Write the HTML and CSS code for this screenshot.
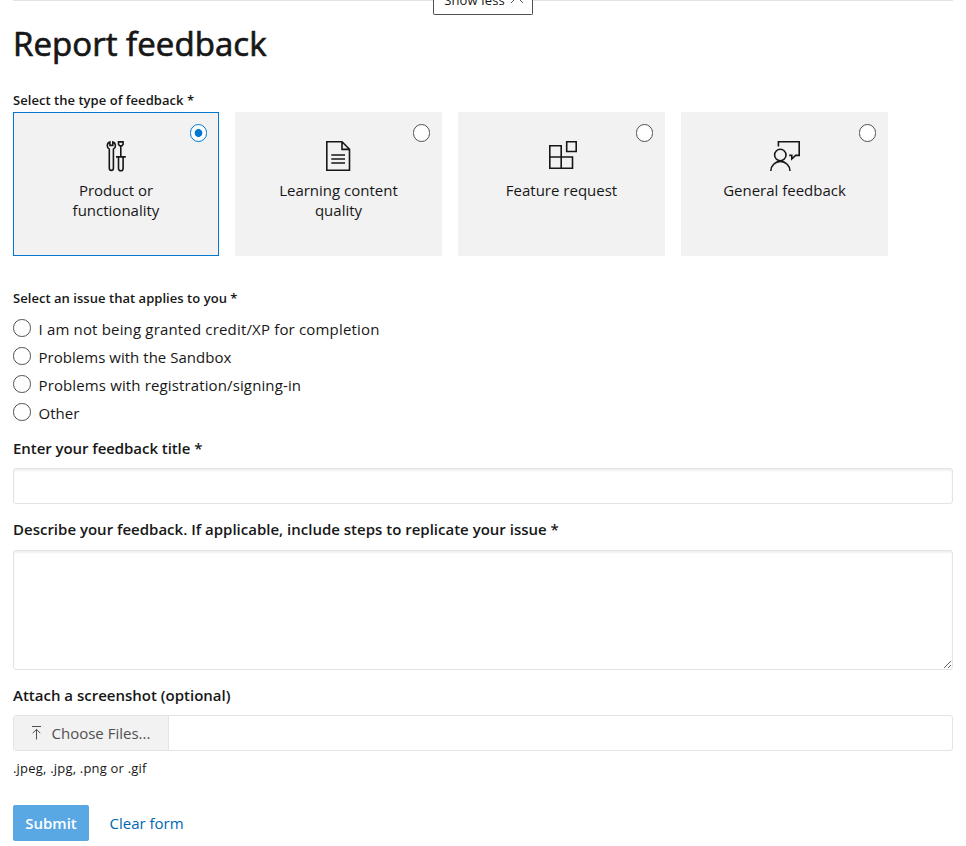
FILE: index.html
```html
<!DOCTYPE html>
<html lang="en">
<head>
<meta charset="utf-8">
<title>Report feedback</title>
<link rel="stylesheet" href="styles.css">
</head>
<body>
<main class="page">
  <div class="toggle-bar">
    <button class="toggle" type="button"><span class="toggle-text">Show less</span>
      <svg class="chevron" width="14" height="8" viewBox="0 0 14 8"><path d="M1 7 7 1l6 6" fill="none" stroke="#505050" stroke-width="1"/></svg>
    </button>
  </div>
  <h1 class="title"><span>Report feedback</span></h1>
  <form class="form">
    <div class="label label-type"><span>Select the type of feedback *</span></div>
    <div class="cards">
      <label class="card card-selected">
        <input class="radio card-radio" type="radio" name="type" checked>
        <svg class="icon" width="33" height="32" viewBox="0 0 33 32"><path d="M9.9 2.1C6.4 3.2 6.6 7.6 9.3 9.1V28.3a2 2 0 0 0 4.1 0V9.1C16.1 7.6 16.3 3.2 12.8 2.1V5.4H9.9ZM18.5 1.9h4.6v2.4l-1 1.5h-2.6l-1-1.5ZM20.8 5.8V16.8M16 16.9h9.8M18.5 17v11.5a2.3 2.3 0 0 0 4.6 0V17"/></svg>
        <span class="card-text"><span>Product or</span><br><span>functionality</span></span>
      </label>
      <label class="card">
        <input class="radio card-radio" type="radio" name="type">
        <svg class="icon" width="33" height="32" viewBox="0 0 33 32"><path d="M4.8 1.8H20L27.5 9.3V30.2H4.8ZM20 1.8V9.4H27.5M9.3 15H23M9.3 19H23M9.3 23H23"/></svg>
        <span class="card-text"><span>Learning content</span><br><span>quality</span></span>
      </label>
      <label class="card">
        <input class="radio card-radio" type="radio" name="type">
        <svg class="icon" width="33" height="32" viewBox="0 0 33 32"><path d="M4.8 5.8H16.2V28.2H4.8ZM4.8 17H27.5V28.2H16.2M21.7 1.8H31.2V11.5H21.7Z"/></svg>
        <span class="card-text"><span>Feature request</span></span>
      </label>
      <label class="card">
        <input class="radio card-radio" type="radio" name="type">
        <svg class="icon" width="33" height="32" viewBox="0 0 33 32"><path d="M10.4 6.6V1.8H31.2V15.4H27.6L23.8 19V15.4H21.2M2.8 31a9.6 9.6 0 0 1 19.2 0"/><circle cx="12.3" cy="15" r="5.7"/></svg>
        <span class="card-text"><span>General feedback</span></span>
      </label>
    </div>
    <div class="label label-issue"><span>Select an issue that applies to you *</span></div>
    <div class="issues">
      <label class="issue"><input class="radio" type="radio" name="issue"><span class="issue-long">I am not being granted credit/XP for completion</span></label>
      <label class="issue"><input class="radio" type="radio" name="issue"><span>Problems with the Sandbox</span></label>
      <label class="issue"><input class="radio" type="radio" name="issue"><span class="issue-medium">Problems with registration/signing-in</span></label>
      <label class="issue"><input class="radio" type="radio" name="issue"><span>Other</span></label>
    </div>
    <label class="field-label label-title" for="title"><span>Enter your feedback title *</span></label>
    <input class="input" id="title" type="text">
    <label class="field-label label-describe" for="description"><span>Describe your feedback. If applicable, include steps to replicate your issue *</span></label>
    <textarea class="textarea" id="description"></textarea>
    <div class="field-label label-attach"><span>Attach a screenshot (optional)</span></div>
    <div class="file">
      <span class="file-cta">
        <svg width="11" height="14" viewBox="0 0 11 14"><path d="M1 .5H10M5.5 13.5V3.5M1.7 7.2 5.5 3.4 9.3 7.2" fill="none" stroke="#505050"/></svg>
        <span>Choose Files...</span>
      </span>
    </div>
    <div class="help"><span>.jpeg, .jpg, .png or .gif</span></div>
    <div class="actions">
      <button class="submit" type="button"><span>Submit</span></button>
      <a class="clear"><span>Clear form</span></a>
    </div>
  </form>
</main>
</body>
</html>
```
FILE: styles.css
```css
* { box-sizing: border-box; }
body {
  margin: 0;
  background: #fff;
  color: #171717;
  font: 400 15px/20px "Open Sans", "Noto Sans", sans-serif;
}
button, input, textarea { font: inherit; }
.page { padding: 0 13px; height: 846px; overflow: hidden; }
.toggle-bar {
  display: flex;
  justify-content: center;
  height: 15px;
  background: linear-gradient(#e3e3e3 1px, transparent 1px);
}
.toggle {
  display: flex;
  align-items: flex-end;
  justify-content: center;
  gap: 5px;
  width: 100px;
  height: 15px;
  padding: 0 0 0 2px;
  overflow: hidden;
  background: #fff;
  border: 1px solid #505050;
  border-top: 0;
  border-radius: 0 0 2px 2px;
  font-size: 13px;
  line-height: 18px;
  color: #171717;
}
.toggle-text { margin-bottom: 5px; letter-spacing: .15px; }
.chevron { margin-bottom: 10px; }
.title {
  margin: 4px 0 0;
  height: 51px;
  font-size: 33px;
  line-height: 50px;
  font-weight: 400;
  letter-spacing: .05px;
  -webkit-text-stroke: .7px #171717;
}
.label, .help { font-size: 13px; line-height: 20px; height: 20px; }
.label { font-weight: 600; letter-spacing: .04px; }
.label-type { margin-top: 20px; }
.cards {
  display: grid;
  grid-template-columns: 206px 207px 207px 207px;
  gap: 16px;
  margin-top: 2px;
}
.card {
  position: relative;
  height: 144px;
  padding-top: 27px;
  background: #f2f2f2;
  border: 1px solid #f2f2f2;
}
.card-selected { border-color: #0078d4; }
.radio {
  appearance: none;
  flex: none;
  width: 17.5px;
  height: 17.5px;
  margin: 0;
  border: 1px solid #505050;
  border-radius: 50%;
  background: #fff;
}
.radio:checked {
  border-color: #0078d4;
  background: radial-gradient(circle, #0078d4 3.6px, #fff 4.2px);
}
.card-radio { position: absolute; top: 11px; right: 11px; }
.icon {
  display: block;
  margin-left: 86px;
  fill: none;
  stroke: #171717;
  stroke-width: 1.6;
}
.card-text { display: block; margin-top: 8px; text-align: center; }
.label-issue { margin-top: 32px; }
.issues { margin-top: 6px; }
.issue { display: flex; align-items: center; gap: 8px; height: 28px; }
.issue span { margin-top: 2px; letter-spacing: .03px; }
.issue .issue-long { letter-spacing: .17px; }
.issue .issue-medium { letter-spacing: .13px; }
.field-label {
  display: block;
  height: 20px;
  margin-top: 12px;
  font-weight: 600;
}
.label-title { letter-spacing: -.06px; }
.input, .textarea {
  display: block;
  width: 940px;
  background: #fff;
  border: 1px solid #e3e3e3;
  border-radius: 3px;
  box-shadow: inset 0 2px 2px rgba(0, 0, 0, .06);
}
.input { height: 36px; margin-top: 10px; }
.label-describe { margin-top: 15px; }
.textarea { height: 120px; margin-top: 11px; resize: vertical; }
.label-attach { margin-top: 15px; }
.file {
  display: flex;
  height: 36px;
  margin-top: 10px;
  border: 1px solid #e3e3e3;
  border-radius: 3px;
}
.file-cta {
  display: flex;
  align-items: center;
  gap: 10px;
  width: 155px;
  padding-left: 16.5px;
  background: #f2f2f2;
  border-right: 1px solid #e3e3e3;
  color: #505050;
}
.help { margin-top: 7px; letter-spacing: .2px; }
.actions { display: flex; align-items: center; margin-top: 27px; }
.submit {
  width: 76px;
  height: 36px;
  padding: 0;
  border: 0;
  border-radius: 2px;
  background: #59a7e3;
  color: #fff;
  font-weight: 600;
}
.clear { margin-left: 20.5px; color: #0065b3; }
```
